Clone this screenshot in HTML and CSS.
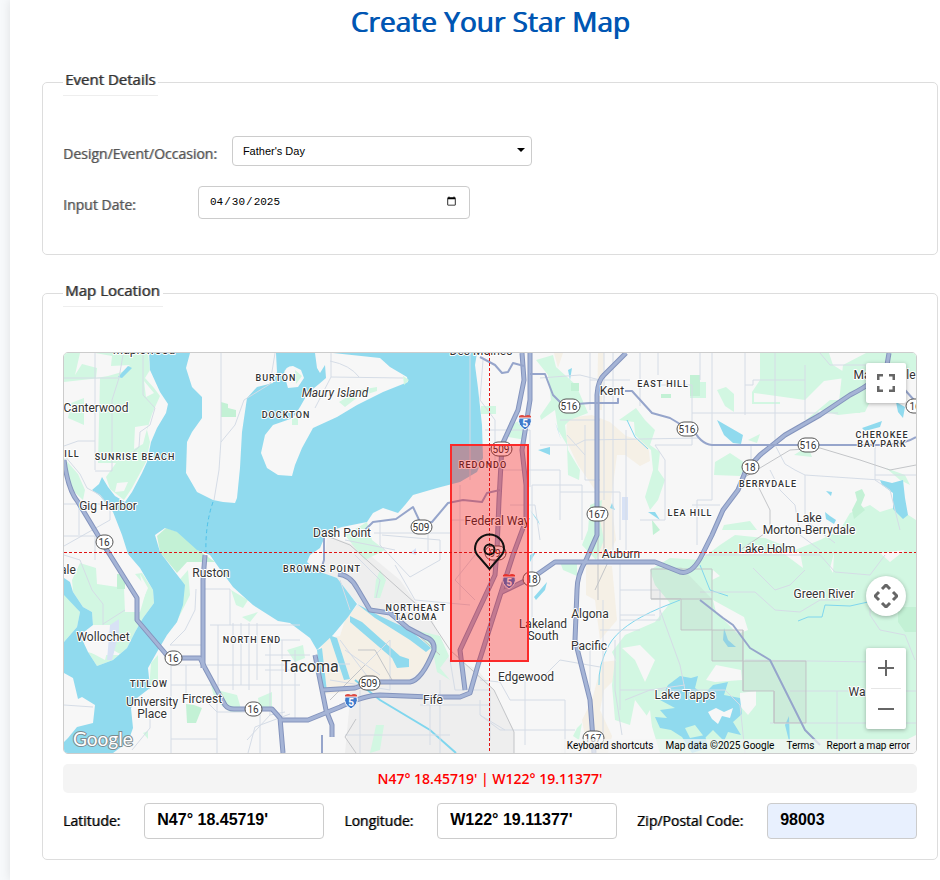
FILE: index.html
```html
<!DOCTYPE html>
<html lang="en">
<head>
<meta charset="utf-8">
<meta name="viewport" content="width=device-width, initial-scale=1">
<title>Create Your Star Map</title>
<link rel="stylesheet" href="styles.css">
</head>
<body>
<main class="page">
<h1 class="title">Create Your Star Map</h1>
<form class="form">
<fieldset class="panel">
<legend class="panel-title">Event Details</legend>
<div class="row">
<label class="row-label" for="occasion">Design/Event/Occasion:</label>
<span class="select-wrap">
<select class="field occasion" id="occasion"><option>Father's Day</option></select>
</span>
</div>
<div class="row">
<label class="row-label" for="date">Input Date:</label>
<input class="field date" id="date" type="date" value="2025-04-30">
</div>
</fieldset>

<fieldset class="panel">
<legend class="panel-title">Map Location</legend>
<div class="map">
<svg class="map-canvas" viewBox="64 353 852 400" preserveAspectRatio="xMidYMid slice" role="img" aria-label="Map of Federal Way and Tacoma">
<defs>
<g id="shield">
<path d="M-6-6Q-3-8 0-6Q3-8 6-6V-3H-6Z" fill="#dc4b43"/>
<path d="M-6-4H6Q8 3 0 8Q-8 3-6-4Z" fill="#3f7bcb" stroke="#fff"/>
</g>
</defs>
<rect x="64" y="353" width="852" height="400" fill="#f7f7f7"/>

<!-- urban areas -->
<g fill="#eee">
<path d="M323 573L327 536L355 545L430 615L450 660L476 668L494 690L514 730V753H345L350 700L348 617L358 604L337 580Z"/>
<path d="M330 540L366 552L400 580L414 600L360 606Z"/>
</g>
<!-- industrial areas -->
<g fill="#f5f0e6">
<path d="M316 655L327 638L340 636L345 620L356 607L370 608L398 625L428 638L434 652L425 668L405 682L350 692L325 694Z"/>
<path d="M567 418L592 415L610 422L626 436L648 442L650 461L640 466L625 455H617L611 500L616 540L606 560L598 556L595 490L578 465L566 440Z"/>
<path d="M586 564L612 566L617 620L600 640L595 600L586 595ZM602 662L620 660L618 676L604 690L600 710L612 736L608 753H588L582 720L592 700Z"/>
<path d="M554 353H563L558 368ZM598 353H604L602 410H597Z"/>
</g>
<!-- parks and forest -->
<g fill="#d2f7e2">
<path d="M64 353H148L150 370L145 378L154 388L160 396L152 414L147 430L150 442L146 462L132 488L124 500L110 489L106 477L116 463L98 463L100 378L64 382Z"/>
<path d="M64 458L78 474L85 490L83 500L72 490L65 470ZM71 403L84 398V425L68 418Z"/>
<path d="M80 563L96 568L97 584L124 588L125 612L140 612L147 588L135 574L142 573L153 590L154 603L143 618L135 632L127 648L113 660L97 666L88 652L98 655L122 655L113 650L110 625L93 625L92 612L83 607L73 592L72 580Z"/>
<path d="M64 592L80 612L77 627L64 642Z"/>
<path d="M151 663L158 655L158 680L149 690ZM175 585L188 570L190 595L175 625Z"/>
<path d="M231 590L248 600L243 608L236 605ZM242 617L258 612L250 622Z"/>
<path d="M208 675L217 690L237 695L242 712H230L215 700ZM258 698L272 692V710H260ZM143 733L148 731V739Z"/>
<path d="M287 650L303 645L305 658L295 662ZM345 535L367 522L372 540L385 550L365 560L355 548Z"/>
<path d="M380 570L386 580L380 598H374L376 580ZM415 630L440 636L449 656L440 668L450 680L437 672L433 652ZM376 725H384L380 750L370 753L374 735Z"/>
<path d="M358 386H377V394L358 397L340 412L340 403ZM400 377L409 382L402 384Z"/>
<path d="M536 360L553 355L556 367L576 385L588 413L570 420L565 425L568 450L580 470L579 480L568 475L567 445L558 430L555 410L541 420L540 416L551 400L548 375Z"/>
<path d="M510 425L526 418V440L508 437ZM481 406H496V414H481Z"/>
<path d="M619 420L636 408L645 420L655 430L650 445L660 452L658 470L665 480L658 500L650 510L645 497L653 470L651 450L635 435L634 422Z"/>
<path d="M590 505L602 500L600 520L604 540L596 560L582 545L588 530ZM560 562L577 560V576L563 570Z"/>
<path d="M760 353H829L833 365L852 377L824 381L805 400L754 393V402H780V404H752V392L760 380ZM843 365L866 353H916V375L870 382L860 413L838 411Z"/>
<path d="M806 420L830 400L848 400L860 380L882 377L865 412L838 415L820 410L810 420ZM690 382H706V398H690ZM717 390L726 387L734 394L734 412L725 406ZM715 462L730 453L748 465L740 476L714 475ZM724 525L750 521L757 530H722ZM748 440L760 434L757 443ZM794 455L808 446L812 457Z"/>
<path d="M850 513L870 505L880 512L896 507L916 520V735L880 753H660L650 720L635 700L625 680L612 652L625 635L655 622L670 603L655 585L650 570L670 558L700 560L720 545L735 535L765 538L795 550L820 540L840 530Z"/>
<path d="M615 660L628 675L635 700L630 725L615 720L612 685ZM577 728L582 723L579 740L573 736Z"/>
<path d="M886 468L905 475L910 485L900 480Z"/>
</g>
<g fill="#c3f1d5">
<path d="M221 402L228 404V408L236 410V417H221ZM157 536L166 528L178 532L197 549L215 562H187L177 573L160 552ZM186 704L194 705L202 708L196 723H187ZM117 574H125V589H117Z"/>
<path d="M293 418H298V425H292ZM855 492L862 489L865 495L861 505L865 510L854 519L852 510L857 500ZM898 607H916V632H905L898 622ZM690 375H700V396H690ZM571 383H579V391H571ZM661 394H671V398H661ZM652 520L660 530L653 535Z"/>
</g>
<!-- clearings in the forest -->
<g fill="#f7f7f7">
<path d="M75 375L82 364L97 368L96 378L108 376L122 372L130 365L111 366L112 356L95 353H80ZM144 381L154 393L146 397ZM135 427L148 425L143 444L134 449ZM117 483L128 482L124 491L115 492ZM140 574L148 588L144 597ZM82 638L110 640L105 660L90 652Z"/>
<path d="M713 600L744 617L748 630L738 634L716 612ZM706 680L716 665L741 670L742 680L715 682ZM740 693L756 691L756 705L748 715L740 706ZM622 648L640 645L655 660L645 682L635 660ZM635 735L650 710L655 753H640ZM830 568L834 553L833 573ZM880 553L905 550L890 562ZM713 570L720 576L712 580ZM783 553L800 552L803 568Z"/>
</g>

<!-- sound and lakes -->
<g fill="#90daee">
<path d="M149 353L150 370L160 392L168 404L166 413L157 428L151 442L147 462L142 473L132 492L125 502L115 496L108 487L102 477L99 484L92 490L100 496L113 512L122 535L128 554L140 568L153 590L154 603L143 618L135 632L127 648L113 660L97 666L88 652L80 635L93 625L92 612L83 607L73 592L70 582L64 578V595L80 612L77 627L64 642V673L73 678L78 699L82 697L95 705L93 723L77 727L68 738L64 742V753H113L128 742L133 728L131 708L137 698L150 688L148 668L157 652L167 635L177 622L183 605L185 585L175 572L160 552L155 535L165 528L177 532L197 550L210 555L217 565L233 587L253 605L278 621L290 623L310 638L317 650L333 635L348 617L357 604L337 578L323 573L313 567L307 562L310 555L320 548L327 532L342 527L367 522L373 513L383 508L398 513L405 505L413 495L437 488L460 482L477 472L483 458L482 425L478 388L475 365L477 353Z"/>
<path d="M317 650L322 648L327 692L322 693ZM329 635L337 638L350 679L344 680ZM350 616L362 622L400 656L409 659V667L397 668L392 658L350 622ZM357 604L380 616L410 630L431 648L426 652L410 640L375 618Z"/>
<path d="M118 377L128 366L132 368L122 378ZM538 450L550 447L550 455ZM568 370L572 368L570 380ZM555 422L561 440L558 430ZM530 510L538 520L540 525ZM648 512L660 520L655 512ZM717 420L743 435L741 444L733 443L724 435ZM825 512L830 516L836 520L834 524L826 519ZM826 491L832 492L831 496ZM862 428L882 421L880 427L865 431ZM880 480L892 483L903 480L905 498L908 515L903 519L893 509L893 493L882 485ZM896 402L905 407L903 418L898 412Z"/>
<path d="M660 700L668 685L680 676L691 678L698 676L695 688L704 694L713 685L728 682L724 695L740 698L742 714L733 722L741 735L728 732L724 741L713 730L705 738L695 725L685 728L690 738L705 735L708 748L692 753L682 737L671 730L660 728L655 717L667 718L660 710L675 708Z"/>
<path d="M724 628L728 640L736 647L728 647L723 640ZM530 555L536 552L530 562ZM534 597L547 582L545 590L536 600ZM785 725L789 716L790 745ZM595 403L596 414ZM612 503L615 510L610 508Z"/>
</g>
<path d="M708 712L716 708L724 712L733 708L730 718L722 716L718 724L712 719Z" fill="#f7f7f7"/>
<g fill="none" stroke="#7fd6ee" stroke-width="2">
<path d="M599 685Q598 665 609 645T660 608L680 600" stroke-width="1"/>
<path d="M355 680L380 700L430 730L456 753"/>
<path d="M798 621L808 617L822 617L825 605L850 606L868 602M700 565L710 590L728 596" stroke-width="1"/>
<path d="M627 420L635 437L648 449"  stroke-width="1"/>
</g>
<!-- islands -->
<g fill="#f7f7f7">
<path d="M190 353L186 368L192 387L202 397L202 418L192 432L187 442L186 473L197 492L213 500L223 502L235 503L237 498L240 468L242 432L247 398L257 387L273 383L277 372L276 353Z"/>
<path d="M284 374Q285 366 293 366L301 370L304 378L298 387L288 388Z"/>
<path d="M315 353L317 368L320 373L325 365L326 378L319 384L308 393L300 407L293 418L273 425L265 435L261 453L267 468L278 475L292 476L295 465L302 448L313 428L337 417L357 405L383 392L408 382L407 377L390 367L380 358L333 353Z"/>
</g>
<g fill="#d2f7e2"><path d="M295 370L302 376L296 384ZM339 402L359 390L377 387V391L358 397L345 407ZM403 376L409 380L404 385ZM292 418H298V425H292Z"/></g>
<path d="M221 402L228 404V408L236 410V417H221Z" fill="#c3f1d5"/>
<g fill="#d8e2f5"><path d="M110 625L119 619L119 633L112 660H107ZM622 497H628V520H622ZM410 553L416 548V555Z"/></g>

<!-- local roads -->
<g class="minor">
<path d="M95 353V470M64 378H119L123 355M119 378L112 400V471H95M64 446L78 441H95M143 353V395L155 408L150 425L140 432L139 447L127 457M64 504H110M64 536H95V560M79 504V535M110 504V520L64 546M64 455L80 474L87 488L100 495L108 505"/>
<path d="M221 353V440L219 470L214 500M221 442L235 425L244 400L270 384L275 353M331 353V377L403 378M331 377L315 408M330 361Q350 365 359 377"/>
<path d="M203 589H230V625M196 589L195 610L185 630L170 645H205M210 625H300M218 625V700M233 623V690M241 623V685M249 623V690M257 623V680M171 665H285M171 685H300M171 665V753M186 665V700M217 700V753M171 739H217M205 700L217 712H260V753M247 740L270 715L285 712M248 753L255 727L290 714M265 640H300M265 655H310M265 670H315M270 635V715M282 640V720M295 650V720M300 664H350"/>
<path d="M64 705L93 707M64 555L80 560L92 590L103 604V625M125 610L103 624M132 750L150 728V715"/>
<path d="M374 533H450M380 520V545L410 577L440 560V540M428 533V552M345 540L395 550M382 535L440 540M395 565L415 600L470 605M355 555L380 580L376 598"/>
<path d="M470 353V480M483 360L480 400L495 420V470M485 430H530V487M450 520H500M460 485V600M475 555L455 580L475 600M500 470H560V520M532 485H582V540M532 485V620M510 505H535L540 540M560 420H600M540 445H575L585 440L700 438M560 492H620V540M590 353V410M604 353V500M613 353V560M626 430V550M590 380H630M540 378L580 375L600 380M585 425V480H600M567 435L585 455"/>
<path d="M640 353V406M658 353V375M660 385H692V445H655L665 460V520H640M700 353V380M712 353V500H697V545M745 353V385H753V380H805M745 385V415M775 353V442M805 365V420M692 413H838M820 353L830 365H870M875 445V480L890 490L900 530M875 475H916M775 445L785 464L795 470L805 475L880 480M770 470L780 490L795 505L800 535L820 550M805 475V520L835 543M751 445V465M692 505H720"/>
<path d="M700 555H820L835 572L870 575L885 555M753 568L775 590L790 585L805 570M700 592H755L775 610L800 612L820 600L840 600M870 600V615L880 630L905 635L915 660M868 648V660M790 691H916M837 691V753M770 723H916M745 660L875 662M620 590H660V620H620M620 615H655M620 690H725L740 705L745 753M620 560V710M600 630H640M625 700L650 690L685 685M660 610L680 665L685 690M545 675L560 660L600 667M480 680L500 682L510 700H565V753M480 715L500 730H525M525 675V745M525 730H575M590 645V690M603 600V750M615 640V690L622 735M480 700V715L505 730"/>
<path d="M450 660L455 690H490V740M440 680V753M430 700V745M420 705H490M345 735H450M360 690V753M340 580L350 610M365 665L390 640V690M345 650L380 675M330 680L390 690M340 640L370 680"/>
</g>
<g class="rail">
<path d="M327 536L350 545L425 612L450 650L494 690L514 732V753M356 719L345 737L356 753M358 650L375 650L392 680M330 700L365 665M740 480L790 450L820 448L860 460L890 470L916 465M755 480L770 510V530L740 550M418 635L440 655M598 495V600M604 510V560M609 560L595 590"/>
<path d="M651 569H712V661H743V691H774V723H806V661H743V630H681V599H651ZM651 599H712M743 630V691M774 691V723"/>
</g>
<path d="M651 569L681 567L712 599V630L743 630V661L774 661H806V723H774V691H743V661H712V630H681V599H651Z" fill="#aaa" opacity=".14"/>

<!-- highways -->
<g class="hwy-case">
<path d="M64 460Q68 490 78 502L105 547L137 598V620L165 653Q168 658 175 658H200L205 668L225 705Q228 709 234 709H272L280 718L283 753"/>
<path d="M205 555L203 580V668M280 720H308L340 707Q365 695 380 695L430 697H460L470 693L478 665L505 580L513 555L526 520V485L522 450L530 400V353"/>
<path d="M522 353L524 380L518 410L502 445L499 500L497 550L495 575L460 650L465 690"/>
<path d="M315 655L320 680L326 710L332 725V737M322 690L355 688L372 682H410Q422 680 434 650Q435 640 425 637L408 628L390 613L370 610L357 588Q350 575 338 574"/>
<path d="M626 353L604 375Q598 380 597 395V535L586 560Q577 575 577 590L575 640L590 700L594 753"/>
<path d="M889 353L887 365Q880 380 850 395L820 415L785 435L760 455L746 470L738 490L723 510L712 535L702 555Q692 575 680 572L655 562H555L535 576L500 593"/>
</g>
<g class="hwy">
<path d="M64 460Q68 490 78 502L105 547L137 598V620L165 653Q168 658 175 658H200L205 668L225 705Q228 709 234 709H272L280 718L283 753"/>
<path d="M205 555L203 580V668M280 720H308L340 707Q365 695 380 695L430 697H460L470 693L478 665L505 580L513 555L526 520V485L522 450L530 400V353"/>
<path d="M522 353L524 380L518 410L502 445L499 500L497 550L495 575L460 650L465 690"/>
<path d="M315 655L320 680L326 710L332 725V737M322 690L355 688L372 682H410Q422 680 434 650Q435 640 425 637L408 628L390 613L370 610L357 588Q350 575 338 574"/>
<path d="M626 353L604 375Q598 380 597 395V535L586 560Q577 575 577 590L575 640L590 700L594 753"/>
<path d="M889 353L887 365Q880 380 850 395L820 415L785 435L760 455L746 470L738 490L723 510L712 535L702 555Q692 575 680 572L655 562H555L535 576L500 593"/>
</g>
<g class="hwy-thin">
<path d="M692 427Q700 444 712 445H885Q905 444 916 437"/>
<path d="M320 573L324 560V535M365 530L373 522L396 519L413 507L420 522H432L448 503L463 500L482 502L487 493L500 490M480 357L495 365L502 373L508 372L513 363L524 366M530 374L545 374L553 395L563 405L590 403H618V398M625 391H632L652 413L670 418L690 430M322 735V753M700 600L723 618L733 625L750 648L770 660L805 730L820 745M905 390L914 400"/>
</g>
<path d="M213 502Q205 525 206 553" fill="none" stroke="#4fc1e8" stroke-dasharray="4 3"/>

<!-- route markers -->
<g class="route">
<rect x="96" y="535" width="17" height="14" rx="7"/><text x="104" y="546">16</text>
<rect x="165" y="651" width="17" height="14" rx="7"/><text x="173" y="662">16</text>
<rect x="245" y="702" width="17" height="14" rx="7"/><text x="253" y="713">16</text>
<rect x="411" y="520" width="21" height="14" rx="7"/><text x="421" y="531">509</text>
<rect x="359" y="676" width="21" height="14" rx="7"/><text x="369" y="687">509</text>
<rect x="491" y="442" width="21" height="14" rx="7"/><text x="501" y="453">509</text>
<rect x="485" y="546" width="21" height="14" rx="7"/><text x="495" y="557">99</text>
<rect x="559" y="399" width="21" height="14" rx="7"/><text x="569" y="410">516</text>
<rect x="677" y="422" width="21" height="14" rx="7"/><text x="687" y="433">516</text>
<rect x="798" y="438" width="21" height="14" rx="7"/><text x="808" y="449">516</text>
<rect x="742" y="460" width="17" height="14" rx="7"/><text x="750" y="471">18</text>
<rect x="523" y="572" width="17" height="14" rx="7"/><text x="532" y="583">18</text>
<rect x="587" y="507" width="21" height="14" rx="7"/><text x="597" y="518">167</text>
<rect x="583" y="731" width="21" height="14" rx="7"/><text x="593" y="742">167</text>
<rect x="906" y="399" width="21" height="14" rx="7"/><text x="915" y="410">16</text>
</g>
<g class="interstate">
<use href="#shield" x="525" y="422"/><text x="525" y="427">5</text>
<use href="#shield" x="509" y="581"/><text x="509" y="586">5</text>
<use href="#shield" x="351" y="701"/><text x="351" y="706">5</text>
</g>

<!-- place names -->
<g class="place">
<text x="144" y="354">Maplewood</text><text x="481" y="355">Des Moines</text>
<text x="96" y="412">Canterwood</text><text x="108" y="510">Gig Harbor</text>
<text x="68" y="574">ale</text><text x="211" y="577">Ruston</text>
<text x="103" y="641">Wollochet</text><text x="152" y="706">University</text><text x="152" y="718">Place</text>
<text x="202" y="703">Fircrest</text><text x="342" y="537">Dash Point</text>
<text x="497" y="525">Federal Way</text><text x="433" y="704">Fife</text>
<text x="612" y="395">Kent</text><text x="621" y="558">Auburn</text>
<text x="590" y="618">Algona</text><text x="589" y="650">Pacific</text>
<text x="543" y="628">Lakeland</text><text x="543" y="640">South</text>
<text x="526" y="681">Edgewood</text><text x="685" y="699">Lake Tapps</text>
<text x="809" y="522">Lake</text><text x="809" y="534">Morton-Berrydale</text>
<text x="767" y="553">Lake Holm</text><text x="824" y="598">Green River</text>
<text x="862" y="379">Ma</text><text x="911" y="379">le</text><text x="857" y="696">Wa</text>
<text x="335" y="397" class="island">Maury Island</text>
<text x="310" y="672" class="city">Tacoma</text>
</g>
<g class="district">
<text x="276" y="381">BURTON</text><text x="286" y="418">DOCKTON</text>
<text x="72" y="457">ILL</text><text x="135" y="460">SUNRISE BEACH</text>
<text x="322" y="572">BROWNS POINT</text><text x="252" y="643">NORTH END</text>
<text x="149" y="687">TITLOW</text><text x="416" y="611">NORTHEAST</text><text x="416" y="620">TACOMA</text>
<text x="483" y="468">REDONDO</text><text x="663" y="387">EAST HILL</text>
<text x="690" y="516">LEA HILL</text><text x="768" y="487">BERRYDALE</text>
<text x="882" y="438">CHEROKEE</text><text x="882" y="447">BAY PARK</text>
</g>

<!-- selected area, crosshair and pin -->
<rect x="451" y="445" width="77" height="216" fill="#f00" fill-opacity=".32" stroke="#fb2a2a" stroke-width="2"/>
<path d="M64 552.500H916M489.500 353V753" fill="none" stroke="#e01212" stroke-dasharray="3 2"/>
<path d="M489.500 569L480 558Q475 553 475 549A14 14 0 0 1 504 549Q504 553 499 558Z" fill="none" stroke="#111" stroke-width="2"/>
<circle cx="489.500" cy="549.500" r="5" fill="none" stroke="#111" stroke-width="2"/>
<text class="logo" x="73" y="746">Google</text>
</svg>
<button class="map-btn fullscreen" type="button" aria-label="Toggle fullscreen">
<svg viewBox="0 0 18 18" width="18" height="18"><path d="M1 6V1H6M12 1H17V6M17 12V17H12M6 17H1V12"/></svg>
</button>
<button class="map-btn camera" type="button" aria-label="Map camera controls">
<svg viewBox="0 0 24 24" width="24" height="24"><path d="M8 5L12 1L16 5M8 19L12 23L16 19M5 8L1 12L5 16M19 8L23 12L19 16"/></svg>
</button>
<div class="zoom">
<button class="zoom-btn" type="button" aria-label="Zoom in"><svg viewBox="0 0 18 18" width="18" height="18"><path d="M1 9H17M9 1V17"/></svg></button>
<button class="zoom-btn" type="button" aria-label="Zoom out"><svg viewBox="0 0 18 18" width="18" height="18"><path d="M1 9H17"/></svg></button>
</div>
<div class="credits">
<button class="credit" type="button">Keyboard shortcuts</button>
<span class="credit">Map data ©2025 Google</span>
<a class="credit" href="#terms">Terms</a>
<a class="credit" href="#report">Report a map error</a>
</div>
</div>
<output class="coords">N47° 18.45719' | W122° 19.11377'</output>
<div class="position">
<label class="pos-label" for="lat">Latitude:</label>
<input class="field pos" id="lat" type="text" value="N47° 18.45719'">
<label class="pos-label" for="lng">Longitude:</label>
<input class="field pos" id="lng" type="text" value="W122° 19.11377'">
<label class="pos-label" for="zip">Zip/Postal Code:</label>
<input class="field pos zip" id="zip" type="text" value="98003">
</div>
</fieldset>
</form>
</main>
</body>
</html>
```
FILE: styles.css
```css
* { box-sizing: border-box; }

body {
  margin: 0;
  background: #f7f9fb;
  color: #333;
  font: 14px/20px "Open Sans", sans-serif;
}

.page {
  min-height: 100vh;
  margin-left: 10px;
  padding: 1px 2px 20px 32px;
  background: #fff;
  box-shadow: 0 0 10px rgba(0, 0, 0, 0.1);
}

.title {
  margin: 0 0 28px;
  color: #0056b3;
  font-size: 28px;
  font-weight: 500;
  line-height: 40px;
  text-align: center;
  text-shadow: 1px 0 #0056b3;
}

.form {
  display: flex;
  flex-direction: column;
  gap: 25px;
}

.panel {
  min-width: 0;
  margin: 0;
  padding: 40px 20px 20px;
  border: 1px solid #ddd;
  border-radius: 5px;
}

.panel-title {
  padding: 0 3px 6px 2px;
  border-bottom: 1px solid #eee;
  font-size: 15px;
  font-weight: 500;
  text-shadow: 1px 0 rgba(51, 51, 51, 0.6);
}

.row {
  display: flex;
  align-items: center;
  gap: 15px;
  margin-bottom: 20px;
}

.row:last-child { margin-bottom: 15px; }

.row-label {
  min-width: 120px;
  padding-top: 5px;
  color: #555;
  font-weight: 500;
  text-shadow: 1px 0 rgba(85, 85, 85, 0.5);
}

.field {
  border: 1px solid #ccc;
  border-radius: 4px;
  background: #fff;
  color: #000;
}

.select-wrap {
  position: relative;
  display: flex;
  width: 300px;
}

.select-wrap::after {
  content: "";
  position: absolute;
  top: 12px;
  right: 7px;
  border: 4px solid transparent;
  border-top-color: #000;
  border-bottom: 0;
  pointer-events: none;
}

.occasion {
  appearance: none;
  width: 100%;
  height: 30px;
  padding: 0 10px;
  font: 11px "Liberation Sans", sans-serif;
}

.date {
  width: 272px;
  height: 33px;
  padding: 0 10px 2px;
  font: 11px "Liberation Mono", monospace;
}

.map {
  position: relative;
  height: 402px;
  margin: 5px 0 10px;
  overflow: hidden;
  border: 1px solid #ccc;
  border-radius: 5px;
}

.map-canvas {
  display: block;
  width: 100%;
  height: 100%;
}

.minor { fill: none; stroke: #d5dce6; stroke-width: 1; }
.rail { fill: none; stroke: #c3c5c8; stroke-width: 1; }
.hwy-case { fill: none; stroke: #8494bd; stroke-width: 5; stroke-linejoin: round; }
.hwy { fill: none; stroke: #a5b4d6; stroke-width: 3; stroke-linejoin: round; }
.hwy-thin { fill: none; stroke: #96a5cb; stroke-width: 2; stroke-linejoin: round; }

.map-canvas text {
  font-family: Roboto, sans-serif;
  text-anchor: middle;
}

.place text,
.district text {
  fill: #333;
  stroke: #fff;
  stroke-width: 2px;
  stroke-linejoin: round;
  paint-order: stroke;
}

.place text { font-size: 12px; }
.place .island { font-style: italic; }
.place .city { font-size: 16px; }
.district text { font-size: 9px; font-weight: 500; letter-spacing: 1px; }

.route rect { fill: #fff; stroke: #555; stroke-width: 1; }
.route text { fill: #333; font-size: 10px; }
.interstate text { fill: #fff; font-size: 10px; font-weight: 700; }

.map-canvas .logo {
  fill: #fff;
  stroke: #7e8a8e;
  stroke-width: 2px;
  paint-order: stroke;
  font-family: Lato, sans-serif;
  font-size: 19px;
  text-anchor: start;
}

.map-btn,
.zoom {
  position: absolute;
  right: 10px;
  width: 40px;
  border: 0;
  border-radius: 2px;
  background: #fff;
  box-shadow: 0 1px 4px rgba(0, 0, 0, 0.3);
}

.map-btn,
.zoom-btn {
  display: flex;
  align-items: center;
  justify-content: center;
  height: 40px;
  padding: 0;
}

.map-btn svg,
.zoom-btn svg {
  fill: none;
  stroke: #666;
  stroke-width: 2;
}

.map-btn svg { stroke-width: 3; }

.fullscreen { top: 10px; }
.camera { bottom: 137px; border-radius: 50%; }
.zoom { bottom: 24px; }

.zoom-btn {
  width: 100%;
  border: 0;
  background: transparent;
}

.zoom-btn + .zoom-btn {
  margin-top: 1px;
}

.zoom-btn + .zoom-btn::before {
  content: "";
  position: absolute;
  top: 40px;
  right: 5px;
  left: 5px;
  border-top: 1px solid #e6e6e6;
}

.credits {
  position: absolute;
  right: 0;
  bottom: 0;
  display: flex;
  background: rgba(245, 245, 245, 0.7);
}

.credit {
  padding: 0 6px;
  border: 0;
  background: transparent;
  color: #000;
  font: 10px/14px Roboto, sans-serif;
  text-decoration: none;
}

.coords {
  display: block;
  margin-bottom: 10px;
  padding: 5px;
  border-radius: 5px;
  background: #f4f4f4;
  color: #f00;
  font-weight: 600;
  line-height: 19px;
  text-align: center;
}

.position {
  display: flex;
  align-items: center;
}

.pos-label {
  flex-shrink: 0;
  margin-right: 24px;
  color: #000;
  font-weight: 500;
  text-shadow: 1px 0 rgba(0, 0, 0, 0.5);
  white-space: nowrap;
}

.pos {
  width: 180px;
  min-width: 0;
  height: 36px;
  margin-right: 20px;
  padding: 0 12px 2px;
  font: bold 16px "Liberation Sans", sans-serif;
}

.zip {
  width: 150px;
  margin-right: 0;
  background: #e8f0fe;
}
```
